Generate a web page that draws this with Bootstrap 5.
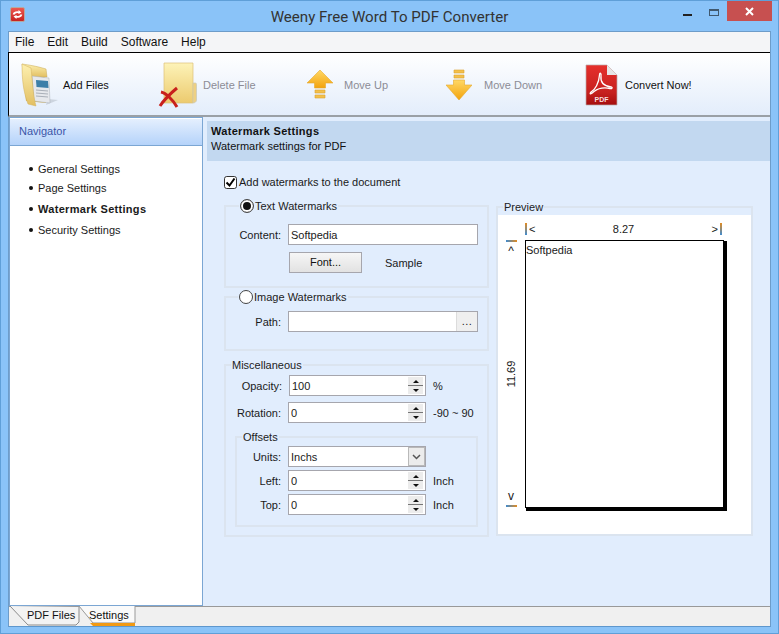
<!DOCTYPE html>
<html lang="en"><head><meta charset="utf-8"><title>Weeny Free Word To PDF Converter</title>
<link rel="stylesheet" href="https://cdn.jsdelivr.net/npm/bootstrap@5.3.0/dist/css/bootstrap.min.css">
<style>
html,body{margin:0;height:100%;overflow:hidden}
body{width:779px;height:634px;background:#8ac3f8;font-family:"Liberation Sans",Arial,sans-serif;font-size:11px;line-height:14px;color:#1a1a1a}
.wframe{height:634px;border:1px solid #5f9fd8}
.tbar{height:30px;flex:none;position:relative}
.apic{margin:6px 0 0 9px}
.ttl{position:absolute;left:0;right:0;top:6px;text-align:center;font-size:15.1px;line-height:20px;color:#333;font-family:"Roboto",sans-serif}
.wbtns{position:absolute;right:6px;top:0;display:flex}
.wb{width:26px;height:20px;display:flex;align-items:center;justify-content:center}
.wb-x{width:45px;background:#c75050}
.client{margin:0 7px;flex:none;height:596px;border:1px solid #6d9cc9;border-bottom-color:#5e97cd;background:#f0f0f0;display:flex;flex-direction:column}
.mbar{height:20px;background:#f4f5f7;flex:none;padding-left:6px;gap:13px;font-size:12px;line-height:20px;color:#111;align-items:center}
.mbar a{color:#111;text-decoration:none}
.tools{height:65px;flex:none;border-top:1px solid #000;border-left:1px solid #000;background:linear-gradient(#fff,#e3edfb);position:relative;border-bottom:2px solid #9aa0a6;margin-left:-1px}
.tool{position:absolute;top:1px;height:62px;display:flex;align-items:center;color:#8c8c96;white-space:nowrap}
.tool.on{color:#111}
.tool svg{flex:none}
.mainrow{flex:1;min-height:0;display:flex;background:#e1edfd}
.navi{width:194px;flex:none;background:#fff;border:1px solid #7ba6d3}
.navi-h{height:28px;background:linear-gradient(#e6f0fe,#b5d3fa);border-bottom:1px solid #7ba6d3;color:#3a55a8;padding:6px 0 0 9px;box-shadow:inset 0 1px 0 #fff}
.navi ul{list-style:none;margin:0;padding:15px 0 0 18px}
.navi li{position:relative;padding-left:10px;height:19px;line-height:16px;color:#1a1a1a}
.navi li::before{content:"";position:absolute;left:1px;top:6px;width:4px;height:4px;border-radius:50%;background:#111}
.navi li.cur{font-weight:700;height:21px;margin-top:2px;letter-spacing:.3px}
.navi li.cur+li{height:21px}
.pane{flex:1;min-width:0;padding-top:4px;position:relative}
.pane-h{height:40px;background:#c2d8f0;padding:3px 0 0 4px;margin-left:4px;line-height:15px;color:#111}
.pane-h b{display:block;letter-spacing:.3px}
.pane-b{display:flex;padding:14px 0 0 21px;gap:7px}
.lft{width:265px;flex:none}
.chkline{display:flex;align-items:center;gap:2px;height:14px;margin-bottom:3px}
input.form-check-input{margin:0;width:13px;height:13px;flex:none;border:1px solid #333;background-color:#fff;box-shadow:none}
input.form-check-input:checked{background-color:#fff;border-color:#333;background-size:13px 13px;background-image:url("data:image/svg+xml,%3csvg xmlns='http://www.w3.org/2000/svg' viewBox='0 0 13 13'%3e%3cpath d='M2.5 6.5l3 3 5-7' fill='none' stroke='%23000' stroke-width='2'/%3e%3c/svg%3e")}
input.form-check-input[type=radio]{width:14px;height:14px;border-radius:50%;border-color:#444}
input.form-check-input[type=radio]:checked{background-image:none;box-shadow:inset 0 0 0 2px #fff,inset 0 0 0 7px #111}
fieldset.grp{border:2px solid #dbe4ef;padding:0;margin:0;min-width:0;border-radius:0}
fieldset.grp>legend{float:none;width:auto;font-size:11px;line-height:14px;margin:0 0 0 13px;padding:0 1px;display:flex;align-items:center;gap:1px;color:#222}
fieldset.g1{height:89px;margin-top:10px}
fieldset.g2{height:61px;margin-top:2px}
fieldset.g2>legend{margin-left:12px}
fieldset.g3{height:179px;margin-top:7px}
fieldset.g4{height:97px;margin:7px 0 0 9px;width:243px}
fieldset.g3>legend{margin-left:5px}
fieldset.g4>legend{margin-left:5px}
.fr{display:flex;align-items:center;height:21px}
.lb{text-align:right;flex:none;padding-right:7px}
.box{height:21px;border:1px solid #a6a6ad;background:#fff;display:flex;align-items:center;flex:none;position:relative}
input.form-control.txt{border:0;border-radius:0;height:19px;min-height:0;padding:0 2px;font-size:11px;line-height:14px;background:transparent;color:#1a1a1a;box-shadow:none;flex:1;min-width:0}
.spn{width:15px;flex:none;height:17px;margin-right:2px;display:flex;flex-direction:column;gap:1px;background:#777}
.spn i{flex:1;background:#ececec;display:flex;align-items:center;justify-content:center}
.spn i::after{content:"";border:3px solid transparent;border-bottom:3px solid #111;border-top:0}
.spn i+i::after{border-bottom:0;border-top:3px solid #111}
.sfx{margin-left:7px}
.btn.fontb{width:73px;height:21px;padding:0;border:1px solid #a6a6ad;border-radius:0;background:linear-gradient(#f6f6f6,#e2e2e2);font-size:11px;line-height:17px;color:#111}
.dots{width:21px;height:19px;background:#efefef;border-left:1px solid #dcdcdc;text-align:center;line-height:19px;letter-spacing:.5px}
.pvw{width:257px;flex:none;margin-top:25px}
fieldset.pv{height:336px;position:relative}
fieldset.pv>legend{margin-left:5px}
.pv-in{background:#fff;margin:1px 0 0 0;height:319px;padding:7px 0 0 7px}
.rul-h{margin-left:20px;width:197px;display:flex;justify-content:space-between;height:17px;line-height:14px;align-items:center;padding-bottom:3px}
.mk{display:flex;align-items:center;gap:2px}
.mk s{display:block;width:2px;height:12px;background:linear-gradient(#e38b1f,#3f8bd0);text-decoration:none}
.pv-body{display:flex}
.rul-v{width:20px;height:268px;display:flex;flex-direction:column;justify-content:space-between;align-items:center;flex:none;padding-right:8px;padding-top:1px}
.rul-v s{display:block;width:11px;height:2px;background:linear-gradient(90deg,#3f8bd0,#e38b1f)}
.rul-v span{line-height:10px;font-size:12px}
.rul-v .vv{transform:rotate(-90deg);white-space:nowrap;width:12px;text-align:center;display:flex;justify-content:center;font-size:11px}
.sht{width:199px;height:268px;background:#fff;border:1px solid #000;box-shadow:2px 2px 0 1px #000;padding:2px 0 0 0;margin-top:1px}
.tabs{height:20px;flex:none;background:#f0f0f0;border-top:1px solid #999;position:relative;padding-left:1px;display:flex;align-items:flex-start}
.tb{position:relative;height:20px;margin-top:-1px;color:#111;flex:none}
.tb svg{position:absolute;left:0;top:0}
.tb span{position:relative;display:block;line-height:16px;padding-top:1px}
</style></head>
<body>
<div class="wframe d-flex flex-column">
  <div class="tbar">
    <svg class="apic" width="15" height="15" viewBox="0 0 15 15"><defs><linearGradient id="ar" x1="0" y1="0" x2="0" y2="1"><stop offset="0" stop-color="#ee5a50"/><stop offset="1" stop-color="#c6201e"/></linearGradient></defs><rect x=".5" y=".5" width="14" height="14" rx="1.5" fill="url(#ar)" stroke="#b5a9a0"/><path d="M3.5 7.5a4 3 0 0 1 6-2M11.5 7.5a4 3 0 0 1-6 2" fill="none" stroke="#fff" stroke-width="1.8"/><path d="M8.5 3l3 2.5-3 1.5zM6.5 12l-3-2.5 3-1.5z" fill="#fff"/></svg>
    <div class="ttl">Weeny Free Word To PDF Converter</div>
    <div class="wbtns">
      <div class="wb"><svg width="10" height="10" viewBox="0 0 10 10"><rect x="0" y="8" width="9" height="2" fill="#222"/></svg></div>
      <div class="wb"><svg width="12" height="10" viewBox="0 0 12 10"><rect x="1.500" y="3.500" width="9" height="6" fill="none" stroke="#40586e"/><rect x="1" y="3" width="10" height="2" fill="#40586e"/></svg></div>
      <div class="wb wb-x"><svg width="9" height="9" viewBox="0 0 9 9"><path d="M1 1l7 7M8 1l-7 7" stroke="#fff" stroke-width="2"/></svg></div>
    </div>
  </div>
  <div class="client">
    <nav class="nav mbar"><a href="#">File</a><a href="#">Edit</a><a href="#">Build</a><a href="#">Software</a><a href="#">Help</a></nav>
    <div class="tools">
      <div class="tool on" style="left:11px">
        <svg width="44" height="48" viewBox="0 0 44 48" style="margin-right:-1px"><defs><linearGradient id="fo" x1="0" y1="0" x2="0" y2="1"><stop offset="0" stop-color="#fdf0b0"/><stop offset="1" stop-color="#e2bf62"/></linearGradient></defs><path d="M2 5l22 3 2 34-20-2z" fill="#d9b65c"/><path d="M26 44l12-5 -10-1z" fill="#b9c2cc" opacity=".6"/><path d="M2 3c7 1 14 2 24 5l1 8H4z" fill="url(#fo)" stroke="#c9a850" stroke-width=".5"/><path d="M12 15l17 2 1 25-16-2z" fill="#e6e8ec" stroke="#aab0b8" stroke-width=".5"/><path d="M16 19l12 1 .5 7-12-1z" fill="#3d7fa8"/><path d="M16 29l12 1M16 32l12 1M16 35l12 1" stroke="#a9afb8"/><path d="M2 3c0 14 1 27 6 40l8 2c-3-10-4-30-5-38z" fill="url(#fo)" stroke="#d2b15a" stroke-width=".5"/></svg>
        <span>Add Files</span>
      </div>
      <div class="tool" style="left:148px">
        <svg width="44" height="48" viewBox="0 0 44 48" style="margin-right:2px"><defs><linearGradient id="fp" x1="0" y1="0" x2="0" y2="1"><stop offset="0" stop-color="#fdf3b8"/><stop offset="1" stop-color="#ecca6e"/></linearGradient></defs><path d="M7 2h29v40H7z" fill="url(#fp)" stroke="#dcc078" stroke-width=".7"/><path d="M36 22h2.5c1 0 1 1 1 2v15c0 2-2 3-3.500 3z" fill="#eed082" stroke="#c9c9b8" stroke-width=".7"/><path d="M4 31c5 1 12 8 16 15" stroke="#c8201c" stroke-width="3" fill="none"/><path d="M20 27c-6 5-13 12-17 18" stroke="#c8201c" stroke-width="3" fill="none"/></svg>
        <span>Delete File</span>
      </div>
      <div class="tool" style="left:298px">
        <svg width="26" height="32" viewBox="0 0 26 32" style="margin-right:11px"><defs><linearGradient id="ua" x1="0" y1="0" x2="0" y2="1"><stop offset="0" stop-color="#ffd866"/><stop offset="1" stop-color="#f3a30c"/></linearGradient></defs><path d="M13 1L26 14H18.500V19H7.500V14H0z" fill="url(#ua)" stroke="#e6a92e" stroke-width=".6"/><path d="M8 21h10v3H8zM8 26h10v3H8z" fill="#f4c04a" stroke="#dca22e" stroke-width=".6"/></svg>
        <span>Move Up</span>
      </div>
      <div class="tool" style="left:437px">
        <svg width="26" height="32" viewBox="0 0 26 32" style="margin-right:12px"><defs><linearGradient id="da" x1="0" y1="0" x2="0" y2="1"><stop offset="0" stop-color="#ffd866"/><stop offset="1" stop-color="#f3a30c"/></linearGradient></defs><path d="M8 1h10v3H8zM8 6h10v3H8z" fill="#f4c04a" stroke="#dca22e" stroke-width=".6"/><path d="M7.500 11H18.500V16H26L13 31 0 16H7.500z" fill="url(#da)" stroke="#e6a92e" stroke-width=".6"/></svg>
        <span>Move Down</span>
      </div>
      <div class="tool on" style="left:576px">
        <svg width="33" height="42" viewBox="0 0 33 42" style="margin-right:7px"><defs><linearGradient id="pd" x1="0" y1="0" x2="0" y2="1"><stop offset="0" stop-color="#e6302c"/><stop offset=".7" stop-color="#c5201e"/><stop offset="1" stop-color="#a50d0d"/></linearGradient></defs><path d="M1 1h21l10 10v30H1z" fill="url(#pd)" stroke="#b9a9a9" stroke-width=".7"/><path d="M22 1l10 10H22z" fill="#e6e6e6"/><path d="M6 28c4-2 8-9 8.500-17 .2-3 2-2 1.500 1-.8 6 3 10 10 11 2 .3 1 2-1 1.500-7-1.500-12 0-16 3-3 3-5 3-3 .5z" fill="none" stroke="#fff" stroke-width="1.300"/><text x="16.500" y="38" text-anchor="middle" font-family="Liberation Sans,sans-serif" font-size="7" font-weight="700" fill="#f6dede">PDF</text></svg>
        <span>Convert Now!</span>
      </div>
    </div>
    <div class="mainrow">
      <aside class="navi">
        <div class="navi-h">Navigator</div>
        <ul><li>General Settings</li><li>Page Settings</li><li class="cur">Watermark Settings</li><li>Security Settings</li></ul>
      </aside>
      <section class="pane">
        <div class="pane-h"><b>Watermark Settings</b>Watermark settings for PDF</div>
        <div class="pane-b">
          <div class="lft">
            <label class="chkline"><input class="form-check-input" type="checkbox" checked>Add watermarks to the document</label>
            <fieldset class="grp g1">
              <legend><input class="form-check-input" type="radio" name="wm" checked>Text Watermarks</legend>
              <div class="fr" style="margin-top:11px"><div class="lb" style="width:62px">Content:</div><div class="box" style="width:190px"><input class="form-control txt" value="Softpedia"></div></div>
              <div class="fr" style="margin-top:7px;margin-left:63px"><button class="btn fontb" type="button">Font...</button><span style="margin-left:23px">Sample</span></div>
            </fieldset>
            <fieldset class="grp g2">
              <legend><input class="form-check-input" type="radio" name="wm">Image Watermarks</legend>
              <div class="fr" style="margin-top:7px"><div class="lb" style="width:62px">Path:</div><div class="box" style="width:190px"><input class="form-control txt"><div class="dots">...</div></div></div>
            </fieldset>
            <fieldset class="grp g3">
              <legend>Miscellaneous</legend>
              <div class="fr" style="margin-top:3px"><div class="lb" style="width:63px">Opacity:</div><div class="box" style="width:137px"><input class="form-control txt" value="100"><div class="spn"><i></i><i></i></div></div><span class="sfx">%</span></div>
              <div class="fr" style="margin-top:6px"><div class="lb" style="width:62px">Rotation:</div><div class="box" style="width:138px"><input class="form-control txt" value="0"><div class="spn"><i></i><i></i></div></div><span class="sfx">-90 ~ 90</span></div>
              <fieldset class="grp g4">
                <legend>Offsets</legend>
                <div class="fr" style="margin-top:2px"><div class="lb" style="width:51px">Units:</div><div class="box" style="width:138px"><input class="form-control txt" value="Inchs"><div class="spn" style="background:#ececec;border:1px solid #b9b9b9;width:17px;height:19px;margin-right:0;align-items:center;justify-content:center"><svg width="9" height="6" viewBox="0 0 9 6"><path d="M1 1l3.500 3.500L8 1" fill="none" stroke="#555" stroke-width="1.500"/></svg></div></div></div>
                <div class="fr" style="margin-top:3px"><div class="lb" style="width:51px">Left:</div><div class="box" style="width:138px"><input class="form-control txt" value="0"><div class="spn"><i></i><i></i></div></div><span class="sfx">Inch</span></div>
                <div class="fr" style="margin-top:3px"><div class="lb" style="width:51px">Top:</div><div class="box" style="width:138px"><input class="form-control txt" value="0"><div class="spn"><i></i><i></i></div></div><span class="sfx">Inch</span></div>
              </fieldset>
            </fieldset>
          </div>
          <div class="pvw">
            <fieldset class="grp pv">
              <legend>Preview</legend>
              <div class="pv-in">
                <div class="rul-h"><span class="mk"><s></s>&lt;</span><span>8.27</span><span class="mk">&gt;<s></s></span></div>
                <div class="pv-body">
                  <div class="rul-v"><div class="d-flex flex-column align-items-center gap-1"><s></s><span>^</span></div><span class="vv">11.69</span><div class="d-flex flex-column align-items-center gap-1"><span>v</span><s></s></div></div>
                  <div class="sht">Softpedia</div>
                </div>
              </div>
            </fieldset>
          </div>
        </div>
      </section>
    </div>
    <div class="tabs">
      <div class="tb" style="width:70px"><svg width="70" height="20" viewBox="0 0 70 20"><path d="M0 0L18 19H66L69 16V1H66z" fill="#f3f3f3"/><path d="M0 0L18 19H66L69 16V1" fill="none" stroke="#8b8b8b"/></svg><span style="padding-left:17px">PDF Files</span></div>
      <div class="tb" style="width:57px;margin-left:-1px"><svg width="57" height="20" viewBox="0 0 57 20"><path d="M0 0L14 16H56V0z" fill="#fafafa"/><path d="M0 0L14 17H56V0" fill="none" stroke="#9a9a9a"/><path d="M11 17H56V20H14z" fill="#f29a14"/></svg><span style="padding-left:10px">Settings</span></div>
    </div>
  </div>
</div>
<script src="https://cdn.jsdelivr.net/npm/bootstrap@5.3.0/dist/js/bootstrap.bundle.min.js"></script>
</body></html>
